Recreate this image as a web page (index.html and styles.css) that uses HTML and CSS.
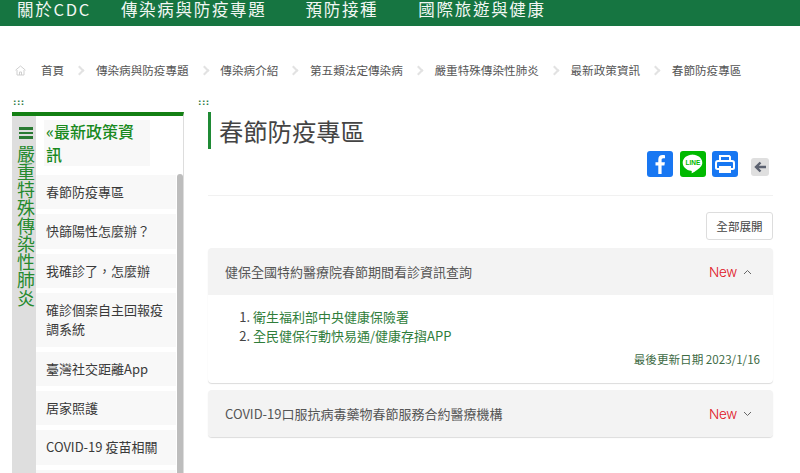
FILE: index.html
```html
<!DOCTYPE html>
<html lang="zh-Hant">
<head>
<meta charset="utf-8">
<title>春節防疫專區</title>
<link rel="stylesheet" href="styles.css">
</head>
<body>
<nav class="topnav">
  <a>關於CDC</a><a>傳染病與防疫專題</a><a>預防接種</a><a>國際旅遊與健康</a>
</nav>
<div class="crumbs">
  <svg class="home" width="11" height="11" viewBox="0 0 11 11" fill="none" stroke="#cfcfcf" stroke-width="1"><path d="M0.5 5.2 5.5 1l5 4.2M2 5v5h7V5M4.500 10V7h2v3"/></svg>
  <a class="first">首頁</a>
  <i></i><a>傳染病與防疫專題</a>
  <i></i><a>傳染病介紹</a>
  <i></i><a>第五類法定傳染病</a>
  <i></i><a>嚴重特殊傳染性肺炎</a>
  <i></i><a>最新政策資訊</a>
  <i></i><a>春節防疫專區</a>
</div>
<div class="layout">
  <aside class="side">
    <div class="dots">:::</div>
    <div class="sidebox">
      <div class="rail">
        <div class="burger"><span></span><span></span><span></span></div>
        <div class="railtext">嚴重特殊傳染性肺炎</div>
      </div>
      <div class="menu">
        <div class="menutitle">«最新政策資訊</div>
        <div class="menubody">
          <ul class="items">
            <li>春節防疫專區</li>
            <li>快篩陽性怎麼辦？</li>
            <li>我確診了，怎麼辦</li>
            <li>確診個案自主回報疫調系統</li>
            <li>臺灣社交距離App</li>
            <li>居家照護</li>
            <li>COVID-19 疫苗相關</li>
            <li></li>
          </ul>
          <div class="scroll"></div>
        </div>
      </div>
    </div>
  </aside>
  <main class="main">
    <div class="dots">:::</div>
    <h1 class="title">春節防疫專區</h1>
    <div class="tools">
      <a class="ico fb"><svg width="26" height="26" viewBox="0 0 26 26"><path fill="#fff" d="M14.600 23v-8.500h2.800l.5-3.300h-3.300V9c0-1 .4-1.700 1.800-1.700H18V4.200c-.4-.1-1.400-.2-2.500-.2-2.500 0-4.200 1.500-4.200 4.300v2.900H8.500v3.300h2.800V23z"/></svg></a>
      <a class="ico ln"><svg width="26" height="26" viewBox="0 0 26 26"><path fill="#fff" d="M13 3.500c-5.700 0-10.300 3.600-10.300 8.200 0 4.100 3.600 7.500 8.400 8.100.9.200.7.700.6 1.600 0 .5-.2 1.100.6.700 1-.5 5.800-3.400 7.900-5.800 1.500-1.600 2.100-3 2.100-4.600 0-4.600-4.600-8.200-10.300-8.200z"/><text x="13" y="14.300" text-anchor="middle" class="linetxt">LINE</text></svg></a>
      <a class="ico pr"><svg width="26" height="26" viewBox="0 0 26 26"><path fill="#fff" d="M7 4h10.500L19 5.500V9h-2V6H9v3H7z"/><path fill="none" stroke="#fff" stroke-width="2" d="M7 18H5.500A1.500 1.500 0 0 1 4 16.500V12a2 2 0 0 1 2-2h14a2 2 0 0 1 2 2v4.500a1.500 1.500 0 0 1-1.500 1.500H19"/><path fill="#fff" d="M7 15h12v7H7z"/></svg></a>
      <a class="back"><svg width="12" height="12" viewBox="0 0 12 12"><path fill="none" stroke="#5c6270" stroke-width="2.400" d="M6.500 1.500 2 6l4.500 4.500M2.500 6H12"/></svg></a>
    </div>
    <div class="rule"></div>
    <div class="expand"><button class="btn">全部展開</button></div>
    <section class="panel">
      <header class="phead">
        <span class="ptitle">健保全國特約醫療院春節期間看診資訊查詢</span>
        <span class="new">New</span>
        <svg class="chev" width="9" height="6" viewBox="0 0 9 6" fill="none" stroke="#666" stroke-width="1"><path d="M1 5 4.500 1.500 8 5"/></svg>
      </header>
      <div class="pbody">
        <ol class="links">
          <li><a>衛生福利部中央健康保險署</a></li>
          <li><a>全民健保行動快易通/健康存摺APP</a></li>
        </ol>
        <div class="updated">最後更新日期 2023/1/16</div>
      </div>
    </section>
    <section class="panel">
      <header class="phead">
        <span class="ptitle">COVID-19口服抗病毒藥物春節服務合約醫療機構</span>
        <span class="new">New</span>
        <svg class="chev" width="9" height="6" viewBox="0 0 9 6" fill="none" stroke="#666" stroke-width="1"><path d="M1 1 4.500 4.500 8 1"/></svg>
      </header>
    </section>
  </main>
</div>
</body>
</html>
```
FILE: styles.css
```css
* { box-sizing: border-box; }
html, body { height: 473px; overflow: hidden; }
body {
  margin: 0;
  background: #fff;
  color: #333;
  font-family: "Noto Sans CJK TC", "Noto Sans", sans-serif;
  font-size: 13px;
}
.topnav {
  display: flex;
  gap: 30px;
  height: 26px;
  padding-left: 17px;
  background: #167541;
  color: #f2f7f3;
  font-size: 16.500px;
  letter-spacing: 1.700px;
  line-height: 19px;
}
.topnav a + a + a { margin-left: 9px; }
.topnav a + a + a + a { margin-left: 10px; }

.crumbs {
  display: flex;
  align-items: center;
  height: 20px;
  margin-top: 34px;
  padding-left: 15px;
  color: #555;
  font-size: 11.600px;
  line-height: 20px;
  white-space: nowrap;
}
.crumbs .first { margin-left: 15px; }
.crumbs i {
  width: 7px;
  height: 7px;
  margin: 0 12.700px 0 12px;
  border-top: 2px solid #e2e2e2;
  border-right: 2px solid #e2e2e2;
  transform: rotate(45deg);
}

.layout {
  display: flex;
  margin-top: 15px;
  padding-left: 12px;
}
.dots {
  height: 17px;
  padding-top: 2px;
  color: #2f7a45;
  font-size: 9px;
  font-weight: 700;
  line-height: 11px;
  letter-spacing: -1.500px;
  font-family: "DejaVu Sans Mono", monospace;
}
.side { width: 172px; flex: none; }
.sidebox {
  display: flex;
  height: 400px;
  border-top: 4px solid #148014;
  border-right: 1px solid #ddd;
}
.rail { width: 24px; flex: none; background: #dedede; padding-top: 11px; }
.burger { display: flex; flex-direction: column; gap: 2px; align-items: center; padding-left: 3px; }
.burger span { width: 14px; height: 2.500px; background: #2a7a33; }
.railtext {
  width: 18px;
  margin: 5px 0 0 5px;
  color: #268a2e;
  font-size: 18px;
  line-height: 18px;
  word-break: break-all;
}
.menu { flex: 1; min-width: 0; }
.menutitle {
  width: 106px;
  margin: 4px 0 9px 8px;
  padding: 0 14px 0 2px;
  background: #f8f8f8;
  color: #198a1e;
  font-size: 16px;
  font-weight: 500;
  line-height: 23px;
}
.menubody { display: flex; }
.items {
  flex: 1;
  margin: 0;
  padding: 0;
  list-style: none;
}
.items li {
  min-height: 34.400px;
  margin-bottom: 5px;
  padding: 7px 6px 8.400px 10px;
  background: #f8f8f8;
  color: #3a3a3a;
  font-size: 13px;
  line-height: 19px;
}
.scroll {
  flex: none;
  width: 6px;
  height: 310px;
  margin: -1px 0 0 1px;
  background: #bdbdbd;
  border-radius: 3px 3px 0 0;
}

.main { flex: none; width: 565px; margin-left: 24px; }
.main .dots { margin-left: -11px; }
.title {
  margin: 0;
  height: 37px;
  padding-left: 8px;
  border-left: 3px solid #1f8a35;
  color: #444;
  font-size: 24.300px;
  font-weight: 400;
  line-height: 37px;
}
.tools {
  display: flex;
  align-items: flex-start;
  justify-content: flex-end;
  gap: 7px;
  height: 44px;
  margin-top: 2px;
  padding-right: 4px;
}
.ico {
  display: block;
  width: 26px;
  height: 26px;
  border-radius: 3px;
}
.ico svg { display: block; }
.fb, .pr { background: #1877f2; }
.pr { margin-left: -1px; }
.ln { background: #00b900; }
.linetxt { fill: #00b900; font: 700 6.500px "Liberation Sans", sans-serif; }
.back {
  display: flex;
  align-items: center;
  justify-content: center;
  width: 18px;
  height: 18px;
  margin: 7px 0 0 6px;
  border-radius: 3px;
  background: #dfdfdf;
}
.rule { height: 1px; background: #f1f1f1; }
.expand { display: flex; justify-content: flex-end; margin: 16px 0 8px; }
.btn {
  width: 67px;
  height: 28px;
  padding: 0;
  border: 1px solid #ddd;
  border-radius: 3px;
  background: #fff;
  color: #444;
  font: 11.600px/26px "Noto Sans CJK TC", sans-serif;
}
.panel {
  margin-bottom: 7px;
  border-radius: 4px;
  box-shadow: 0 1px 1px rgba(0,0,0,.14);
  overflow: hidden;
}
.phead {
  display: flex;
  align-items: center;
  height: 47px;
  padding: 0 21px 0 17px;
  background: #f3f3f3;
}
.ptitle { flex: 1; color: #555; font-size: 13px; }
.new { margin-right: 6px; color: #e0141e; font: 300 13.500px "Inter", sans-serif; letter-spacing: -.3px; }
.chev { flex: none; }
.pbody { height: 88px; padding-top: 12px; }
.links { margin: 0; padding-left: 45px; line-height: 19px; font-size: 13px; color: #444; }
.links a { color: #2f7d3a; }
.updated {
  margin-top: 5px;
  padding-right: 13px;
  color: #3d6b45;
  font-size: 11.600px;
  line-height: 18px;
  text-align: right;
}
```
